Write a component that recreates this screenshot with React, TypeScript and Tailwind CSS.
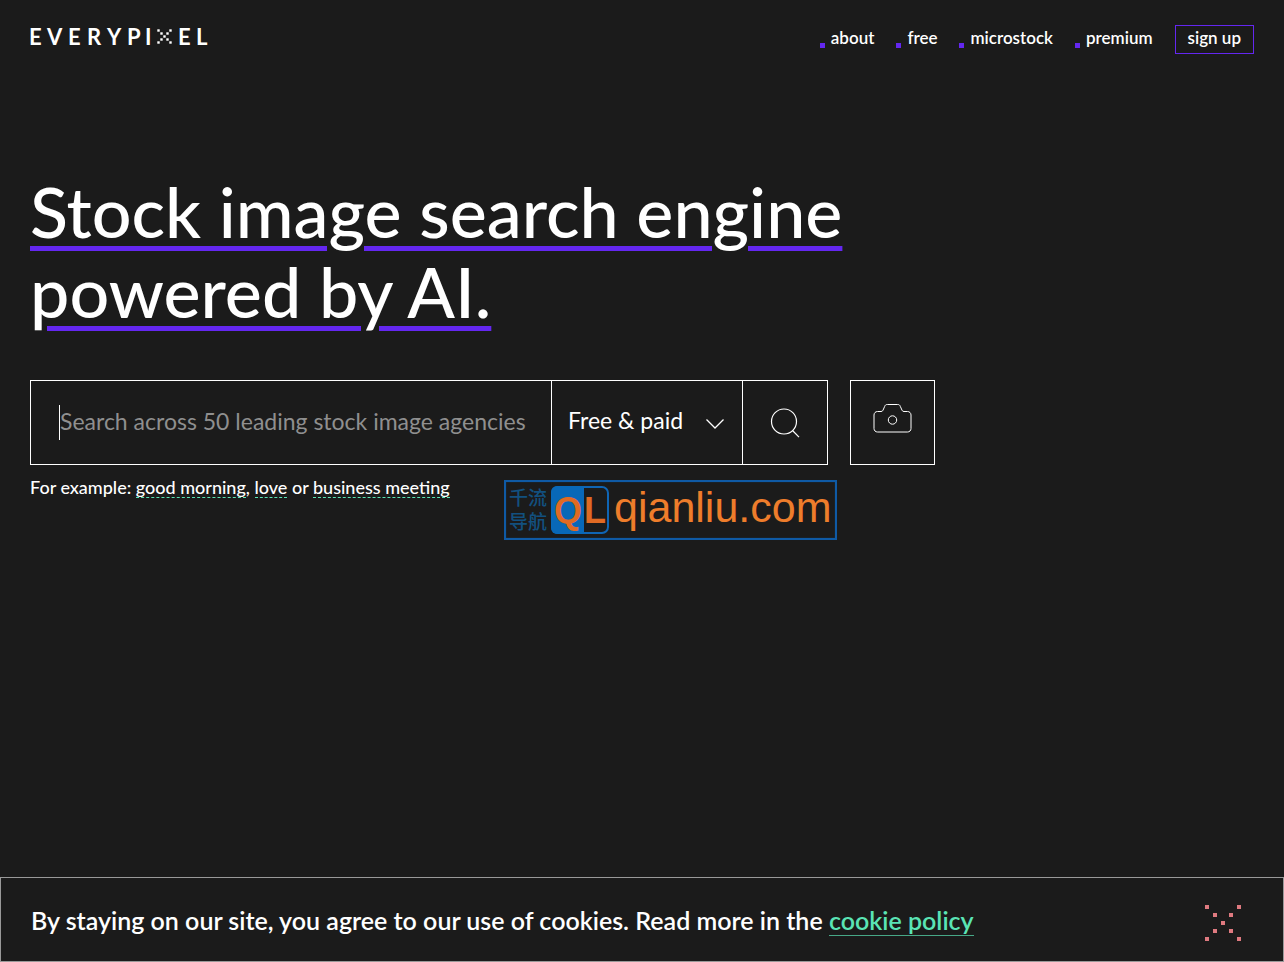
import { useState } from 'react'

const navLinks = ['about', 'free', 'microstock', 'premium']

const logoDots = [
    [0, 0], [12, 0], [3, 3], [9, 3], [6, 6], [3, 9], [9, 9], [0, 12], [12, 12]
]

const closeDots = [
    [0, 0], [32, 0], [8, 8], [24, 8], [16, 16], [8, 24], [24, 24], [0, 32], [32, 32]
]

function Logo() {
    return (
        <a href="#" aria-label="Everypixel" className="block">
            <svg width="188" height="32" viewBox="0 0 188 32" className="-mt-1 -ml-1 block">
                <text
                    x="3 21 42 61 81 101 119 152 170"
                    y="24"
                    fill="#fff"
                    fontSize="22"
                    fontWeight="700"
                    fontFamily="Lato, sans-serif"
                >
                    EVERYPIEL
                </text>
                <g fill="#fff">
                    {logoDots.map(([x, y]) => (
                        <rect key={`${x}-${y}`} x={131.3 + x} y={8.3 + y} width="2.4" height="2.4" />
                    ))}
                </g>
            </svg>
        </a>
    )
}

function Header() {
    return (
        <header className="flex items-start justify-between px-[30px] pt-[25px]">
            <Logo />
            <nav className="flex items-center gap-[22px] text-[17px] leading-6 font-semibold">
                {navLinks.map((link) => (
                    <a key={link} href={`#${link}`} className="flex items-end gap-[6px] pb-[3px]">
                        <span className="mb-[2px] h-[5px] w-[5px] bg-[#6427f0]"></span>
                        {link}
                    </a>
                ))}
                <a href="#signup" className="border border-[#6427f0] px-3 pb-[3px]">sign up</a>
            </nav>
        </header>
    )
}

function SearchForm() {
    const [query, setQuery] = useState('')

    return (
        <form className="flex max-w-[905px] gap-[22px]" onSubmit={(e) => e.preventDefault()}>
            <div className="flex h-[85px] min-w-0 flex-1 border border-white text-[23px]">
                <div className="flex min-w-0 flex-1 items-center pl-7">
                    <span className="h-[35px] w-px bg-white"></span>
                    <input
                        type="text"
                        aria-label="Search images"
                        value={query}
                        onChange={(e) => setQuery(e.target.value)}
                        placeholder="Search across 50 leading stock image agencies"
                        className="h-full w-full min-w-0 bg-transparent pb-1 outline-none placeholder:text-[#8f8f8f]"
                    />
                </div>
                <div className="relative w-[191px] border-l border-white">
                    <select
                        aria-label="License type"
                        className="h-full w-full appearance-none bg-transparent pb-1 pl-4 outline-none"
                    >
                        <option>Free &amp; paid</option>
                        <option>Free</option>
                        <option>Paid</option>
                    </select>
                    <svg
                        width="20"
                        height="12"
                        viewBox="0 0 20 12"
                        fill="none"
                        stroke="#fff"
                        strokeWidth="1.3"
                        className="pointer-events-none absolute top-[37px] right-[17px]"
                    >
                        <path d="M1.5 1.5 10 10l8.5-8.5" />
                    </svg>
                </div>
                <button type="submit" aria-label="Search" className="flex w-[85px] items-center justify-center border-l border-white">
                    <svg width="30" height="30" viewBox="0 0 30 30" fill="none" stroke="#fff" strokeWidth="1.2">
                        <circle cx="14" cy="13.5" r="12.5" />
                        <path d="m22.5 22.5 6.5 6.7" />
                    </svg>
                </button>
            </div>
            <button type="button" aria-label="Search by image" className="flex h-[85px] w-[85px] items-center justify-center border border-white pb-2">
                <svg width="40" height="30" viewBox="0 0 40 30" fill="none" stroke="#fff" strokeWidth="1">
                    <path d="M4.5 7.5h3.5c1 0 1.6-.4 2-1.3l1.7-3.8c.5-1.4 1.2-1.9 2.6-1.9h10.4c1.4 0 2.1.5 2.6 1.9l1.7 3.8c.4.9 1 1.3 2 1.3h3.5c2 0 3.5 1.5 3.5 3.5v13.5c0 2-1.5 3.5-3.5 3.5h-30c-2 0-3.5-1.5-3.5-3.5v-13.5c0-2 1.5-3.5 3.5-3.5z" />
                    <circle cx="19.5" cy="16" r="4.2" />
                </svg>
            </button>
        </form>
    )
}

function ExampleLink({ text }: { text: string }) {
    return (
        <a href="#" className="inline-block border-b border-dashed border-[#5ae4b5] leading-5">{text}</a>
    )
}

function SiteBadge() {
    return (
        <svg width="333" height="60" viewBox="0 0 333 60" className="block">
            <rect x="1" y="1" width="331" height="58" fill="none" stroke="#0f5aa5" strokeWidth="2.2" />
            <g fill="#12507f" fontSize="19" fontWeight="500" fontFamily="'Noto Sans CJK SC', sans-serif">
                <text x="5" y="25">千流</text>
                <text x="5" y="49">导航</text>
            </g>
            <rect x="48" y="7" width="56" height="46" rx="6" fill="none" stroke="#0f65b5" strokeWidth="2" />
            <path d="M80 6H53a6 6 0 0 0-6 6v36a6 6 0 0 0 6 6h27z" fill="#0868b8" />
            <g fill="#e06a24" fontSize="36" fontWeight="700" fontFamily="'Liberation Sans', sans-serif">
                <text x="50" y="43">Q</text>
                <text x="80" y="43">L</text>
            </g>
            <text x="110" y="42" fontSize="43" fill="#ee7d2b" fontFamily="'Liberation Sans', sans-serif">
                qianliu.com
            </text>
        </svg>
    )
}

function CookieBar() {
    const [open, setOpen] = useState(true)

    if (!open) return null

    return (
        <footer className="mt-auto flex min-h-[85px] items-center justify-between border border-[#999] pr-[41px] pl-[30px]">
            <p className="text-[25px] leading-8 font-semibold">
                By staying on our site, you agree to our use of cookies. Read more in the{' '}
                <a href="#cookies" className="inline-block border-b border-[#5ae4b5]/70 leading-[30px] text-[#5ae4b5]">cookie policy</a>
            </p>
            <button type="button" aria-label="Close" onClick={() => setOpen(false)} className="pt-[6px]">
                <svg width="38" height="38" viewBox="0 0 38 38" fill="#df7a80" className="block">
                    {closeDots.map(([x, y]) => (
                        <rect key={`${x}-${y}`} x={1 + x} y={1 + y} width="4" height="4" />
                    ))}
                </svg>
            </button>
        </footer>
    )
}

export default function App() {
    return (
        <div className="flex min-h-screen flex-col bg-[#1b1b1b] font-[Lato,sans-serif] text-white">
            <Header />
            <main className="relative px-[30px] pt-[117px]">
                <h1 className="mb-[49px] max-w-[905px] text-[70px] leading-[80px] font-medium">
                    <span className="underline decoration-[#6427f0] decoration-[5px] underline-offset-[8px]">
                        Stock image search engine<br />
                        powered by AI.
                    </span>
                </h1>
                <SearchForm />
                <p className="mt-3 text-lg leading-5 font-medium">
                    For example: <ExampleLink text="good morning" />, <ExampleLink text="love" /> or <ExampleLink text="business meeting" />
                </p>
                <div className="absolute top-[426px] left-[504px]">
                    <SiteBadge />
                </div>
            </main>
            <CookieBar />
        </div>
    )
}
